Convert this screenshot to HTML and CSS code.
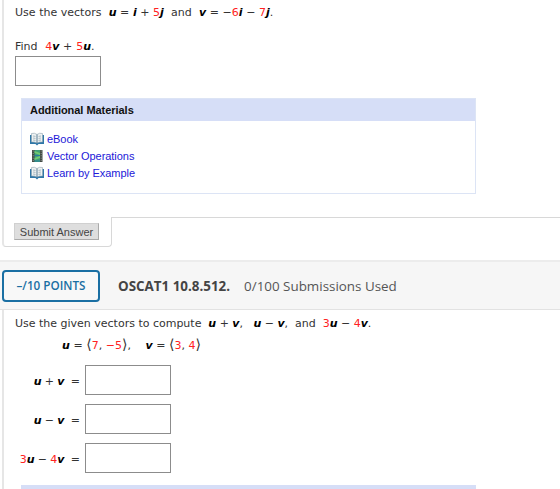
FILE: index.html
```
<!DOCTYPE html>
<html lang="en">
<head>
<meta charset="utf-8">
<title>Vectors</title>
<link rel="stylesheet" href="styles.css">
</head>
<body>
<section class="question first">
  <p class="line intro">Use the vectors&nbsp; <b>u</b> = <b>i</b> + <em>5</em><b>j</b>&nbsp; and&nbsp; <b>v</b> = −<em>6</em><b>i</b> − <em>7</em><b>j</b>.</p>
  <p class="line find">Find&nbsp; <em>4</em><b>v</b> + <em>5</em><b>u</b>.</p>
  <input class="answer" type="text" aria-label="Answer">
  <div class="materials">
    <h2>Additional Materials</h2>
    <ul>
      <li><svg class="icon" viewBox="0 0 14 14"><path d="M0 3h14v9H8.500L7 13.500 5.500 12H0z" fill="#2f77a8"/><path d="M1.500 1.500Q4.500.5 7 2.500 9.500.5 12.500 1.500v8.500Q9.500 9.500 7 11 4.500 9.500 1.500 10z" fill="#eef2f3" stroke="#8fa3ae" stroke-width=".6"/><path d="M7 2.500V11" stroke="#5d7f95"/><path d="M3 4l2.500.4M3 6l2.500.4M3 8l2.500.4M11 4l-2.500.4M11 6l-2.500.4M11 8l-2.500.4" fill="none" stroke="#9aabb5" stroke-width=".8"/></svg><a>eBook</a></li>
      <li><svg class="icon" viewBox="0 0 14 14"><path d="M2 1h10.500v12H2z" fill="#414943"/><path d="M4.500 1H10v12H4.500z" fill="#3f9f78"/><path d="M4.500 2L10 4v2L4.500 4zM4.500 9L10 7v2l-5.500 2z" fill="#74cb70"/><path d="M4.500 6.500H10M4.500 12H10" stroke="#287ca0"/><path d="M3.200 1.500v11M11.200 1.500v11" stroke="#aab2ac" stroke-width=".8" stroke-dasharray="1 1.400"/></svg><a>Vector Operations</a></li>
      <li><svg class="icon" viewBox="0 0 14 14"><path d="M0 3h14v9H8.500L7 13.500 5.500 12H0z" fill="#2f77a8"/><path d="M1.500 1.500Q4.500.5 7 2.500 9.500.5 12.500 1.500v8.500Q9.500 9.500 7 11 4.500 9.500 1.500 10z" fill="#eef2f3" stroke="#8fa3ae" stroke-width=".6"/><path d="M7 2.500V11" stroke="#5d7f95"/><path d="M3 4l2.500.4M3 6l2.500.4M3 8l2.500.4M11 4l-2.500.4M11 6l-2.500.4M11 8l-2.500.4" fill="none" stroke="#9aabb5" stroke-width=".8"/></svg><a>Learn by Example</a></li>
    </ul>
  </div>
</section>
<div class="actions">
  <div class="tab"><button>Submit Answer</button></div>
  <div class="edge"></div>
</div>
<header class="bar">
  <span class="points">–/10 POINTS</span>
  <strong>OSCAT1 10.8.512.</strong>
  <span class="used">0/100 Submissions Used</span>
</header>
<section class="question second">
  <p class="line compute">Use the given vectors to compute&nbsp; <b>u</b> + <b>v</b>,&nbsp;&nbsp; <b>u</b> − <b>v</b>,&nbsp; and&nbsp; <em>3</em><b>u</b> − <em>4</em><b>v</b>.</p>
  <p class="line given"><b>u</b> = <i>⟨</i><em>7</em>, <em>−5</em><i>⟩</i>,&nbsp;&nbsp;&nbsp; <b>v</b> = <i>⟨</i><em>3</em>, <em>4</em><i>⟩</i></p>
  <div class="rows">
    <label><span><b>u</b> + <b>v</b>&nbsp; =</span><input class="answer" type="text"></label>
    <label><span><b>u</b> − <b>v</b>&nbsp; =</span><input class="answer" type="text"></label>
    <label><span><em>3</em><b>u</b> − <em>4</em><b>v</b>&nbsp; =</span><input class="answer" type="text"></label>
  </div>
  <div class="next-materials"></div>
</section>
</body>
</html>
```
FILE: styles.css
```
* { box-sizing: border-box; }
body { margin: 0; height: 489px; overflow: hidden; background: #fff; color: #333; font: 11px/16px "DejaVu Sans", sans-serif; }
p, h2, ul { margin: 0; padding: 0; }
b { color: #000; font-style: italic; }
em { color: #f22; font-style: normal; }
.question { margin-left: 2px; border-left: 2px solid #e6e6e6; padding-left: 11px; }
.first { height: 217px; padding-top: 5px; }
.line { height: 16px; white-space: nowrap; }
.intro { word-spacing: 0.1px; }
.find { margin-top: 17px; padding-top: 1px; word-spacing: 0.3px; }
.answer { display: block; width: 86px; height: 30px; margin: 0; padding: 0; border: 1px solid #8c8c8c; border-radius: 0; background: #fff; }
.first .answer { margin-top: 2px; }
.materials { width: 455px; height: 96px; margin: 12px 0 0 6px; border: 1px solid #dce4f5; }
.materials h2 { height: 22px; padding-left: 8px; background: #d6def7; color: #111; font: bold 11px/22px "Liberation Sans", sans-serif; letter-spacing: -0.04px; }
.materials ul { list-style: none; padding: 9px 0 0 8px; }
.materials li { display: flex; align-items: center; gap: 3px; height: 17px; color: #2218d8; font: 11px/17px "Liberation Sans", sans-serif; letter-spacing: -0.04px; }
.materials a { padding-top: 2px; }
.icon { width: 14px; height: 14px; }
.actions { display: flex; height: 43px; padding-left: 2px; }
.tab { width: 110px; height: 30px; padding: 6px 0 0 10px; border: solid #d8d8d8; border-width: 0 1px 1px; border-left: 2px solid #e6e6e6; border-radius: 0 0 4px 4px; }
.edge { flex: 1; height: 2px; margin-left: -1px; border-top: 1px solid #d8d8d8; }
button { display: block; width: 85px; height: 17px; padding: 0; border: 1px solid; border-color: #d0d0d0 #aaa #aaa #d0d0d0; background: #dedede; color: #444; font: 11px/14px "Liberation Sans", sans-serif; }
.bar { display: flex; align-items: center; height: 50px; padding-left: 2px; border-top: 2px solid #ececec; border-bottom: 1px solid #e2e2e2; background: #f6f6f6; color: #444; font: 13.4px/20px "Open Sans", sans-serif; }
.points { width: 98px; height: 32px; border: 2px solid #1a6fa3; border-radius: 4px; background: #f8f8f8; color: #1a6fa3; font-size: 11.7px; font-weight: 600; line-height: 27px; text-align: center; }
.bar strong { margin-left: 18px; }
.used { margin-left: 14px; color: #555; }
.second { height: 179px; padding-top: 6px; }
.compute { word-spacing: -0.03px; }
.given { margin: 5px 0 0 47px; word-spacing: 0.1px; }
.given i { font-style: normal; font-size: 14px; line-height: 14px; }
.rows { display: grid; gap: 9px; margin-top: 12px; }
.rows label { display: flex; align-items: center; height: 30px; }
.rows label span { width: 65px; margin-right: 5px; padding-top: 4px; text-align: right; white-space: nowrap; word-spacing: -0.3px; }
.next-materials { width: 455px; height: 10px; margin: 12px 0 0 6px; background: #d6def7; }
```
